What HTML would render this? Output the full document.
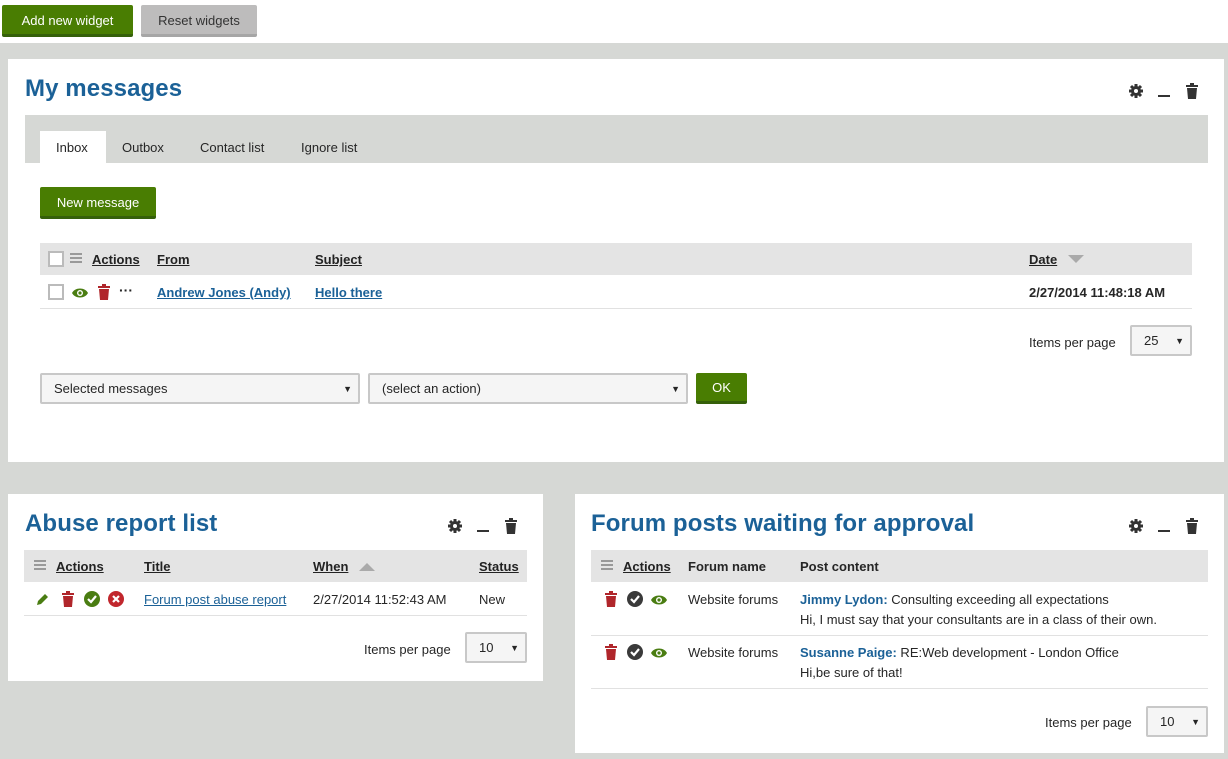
<!DOCTYPE html>
<html><head><meta charset="utf-8"><style>
*{margin:0;padding:0;box-sizing:border-box}
body{width:1228px;height:759px;background:#d6d8d5;font-family:"Liberation Sans",sans-serif;font-size:13px;color:#262626;position:relative;overflow:hidden}
.a{position:absolute}
.top{left:0;top:0;width:1228px;height:43px;background:#fff}
.btn{position:absolute;background:#497d02;color:#fff;border-bottom:3px solid #35600a;border-radius:2px;text-align:center;font-size:13px}
.gbtn{background:#bdbcbc;color:#333;border-bottom:3px solid #a6a6a6}
.panel{position:absolute;background:#fff}
h2{position:absolute;font-size:24px;font-weight:bold;color:#1b6197;white-space:nowrap;letter-spacing:0.1px}
.th{position:absolute;background:#e4e4e4;height:32px}
.u{text-decoration:underline;font-weight:bold;color:#222}
.lnk{color:#1b6197;font-weight:bold;text-decoration:underline}
.sel{position:absolute;background:#f5f5f5;border:2px solid #c8c8c8;border-radius:2px;height:31px;line-height:28px;padding-left:12px;font-size:13px}
.sel:after{content:"▼";position:absolute;right:6px;top:0;font-size:9px}
.line{position:absolute;height:1px;background:#e1e1e1}
.t{position:absolute;white-space:nowrap}
</style></head><body>
<div class="a top"></div>
<div class="btn" style="left:2px;top:5px;width:131px;height:32px;line-height:31px">Add new widget</div>
<div class="btn gbtn" style="left:141px;top:5px;width:116px;height:32px;line-height:31px">Reset widgets</div>

<svg width="0" height="0" style="position:absolute"><defs>
<g id="gear"><circle cx="8" cy="8" r="5" fill="#333"/><g stroke="#333" stroke-width="3"><line x1="8" y1="1" x2="8" y2="15"/><line x1="1" y1="8" x2="15" y2="8"/><line x1="3" y1="3" x2="13" y2="13"/><line x1="13" y1="3" x2="3" y2="13"/></g><circle cx="8" cy="8" r="2" fill="#fff"/></g>
<g id="trash"><rect x="1" y="2" width="12" height="2"/><rect x="5" y="0" width="4" height="2"/><path d="M2 5h10l-1 11H3z"/></g>
<g id="eye"><path d="M0 7C3 1 13 1 16 7 13 13 3 13 0 7z" fill="#4a7d12"/><circle cx="8" cy="7" r="3" fill="#fff"/><circle cx="8" cy="7" r="1.6" fill="#4a7d12"/></g>
<g id="chk"><circle cx="8" cy="8" r="8"/><path d="M4 8l3 3 5-6" stroke="#fff" stroke-width="2.2" fill="none"/></g>
</defs></svg>

<!-- My messages -->
<div class="panel" style="left:8px;top:59px;width:1216px;height:403px"></div>
<h2 style="left:25px;top:75px">My messages</h2>
<svg class="a" style="left:1128px;top:83px" width="16" height="16"><use href="#gear"/></svg>
<div class="a" style="left:1158px;top:95px;width:12px;height:2px;background:#333"></div>
<svg class="a" style="left:1185px;top:83px" width="14" height="16" fill="#333"><use href="#trash"/></svg>
<div class="a" style="left:25px;top:115px;width:1183px;height:48px;background:#d6d8d5"></div>
<div class="a" style="left:40px;top:131px;width:66px;height:32px;background:#fff"></div>
<div class="t" style="left:56px;top:140px">Inbox</div>
<div class="t" style="left:122px;top:140px">Outbox</div>
<div class="t" style="left:200px;top:140px">Contact list</div>
<div class="t" style="left:301px;top:140px">Ignore list</div>
<div class="btn" style="left:40px;top:187px;width:116px;height:32px;line-height:31px">New message</div>
<div class="th" style="left:40px;top:243px;width:1152px"></div>
<div class="a" style="left:48px;top:251px;width:16px;height:16px;border:2px solid #bbb;background:#fff"></div>
<div class="a" style="left:70px;top:253px;width:12px;height:10px;border-top:2px solid #999;border-bottom:2px solid #999"><div style="margin-top:2px;height:2px;background:#999"></div></div>
<div class="t u" style="left:92px;top:252px">Actions</div>
<div class="t u" style="left:157px;top:252px">From</div>
<div class="t u" style="left:315px;top:252px">Subject</div>
<div class="t u" style="left:1029px;top:252px">Date</div>
<div class="a" style="left:1068px;top:255px;width:0;height:0;border-left:8px solid transparent;border-right:8px solid transparent;border-top:8px solid #aaa"></div>
<div class="a" style="left:48px;top:284px;width:16px;height:16px;border:2px solid #bbb;background:#fff"></div>
<svg class="a" style="left:72px;top:286px" width="16" height="14"><use href="#eye"/></svg>
<svg class="a" style="left:97px;top:284px" width="14" height="16" fill="#b0262b"><use href="#trash"/></svg>
<div class="t" style="left:119px;top:282px;font-weight:bold;font-size:14px">···</div>
<div class="t lnk" style="left:157px;top:285px">Andrew Jones (Andy)</div>
<div class="t lnk" style="left:315px;top:285px">Hello there</div>
<div class="t" style="left:1029px;top:285px;font-weight:bold">2/27/2014 11:48:18 AM</div>
<div class="line" style="left:40px;top:308px;width:1152px"></div>
<div class="t" style="left:1029px;top:335px">Items per page</div>
<div class="sel" style="left:1130px;top:325px;width:62px">25</div>
<div class="sel" style="left:40px;top:373px;width:320px">Selected messages</div>
<div class="sel" style="left:368px;top:373px;width:320px">(select an action)</div>
<div class="btn" style="left:696px;top:373px;width:51px;height:31px;line-height:30px">OK</div>

<!-- Abuse -->
<div class="panel" style="left:8px;top:494px;width:535px;height:187px"></div>
<h2 style="left:25px;top:510px">Abuse report list</h2>
<svg class="a" style="left:447px;top:518px" width="16" height="16"><use href="#gear"/></svg>
<div class="a" style="left:477px;top:530px;width:12px;height:2px;background:#333"></div>
<svg class="a" style="left:504px;top:518px" width="14" height="16" fill="#333"><use href="#trash"/></svg>
<div class="th" style="left:24px;top:550px;width:503px"></div>
<div class="a" style="left:34px;top:560px;width:12px;height:10px;border-top:2px solid #999;border-bottom:2px solid #999"><div style="margin-top:2px;height:2px;background:#999"></div></div>
<div class="t u" style="left:56px;top:559px">Actions</div>
<div class="t u" style="left:144px;top:559px">Title</div>
<div class="t u" style="left:313px;top:559px">When</div>
<div class="a" style="left:359px;top:563px;width:0;height:0;border-left:8px solid transparent;border-right:8px solid transparent;border-bottom:8px solid #aaa"></div>
<div class="t u" style="left:479px;top:559px">Status</div>
<svg class="a" style="left:36px;top:592px" width="14" height="14"><path d="M1 13l1-4 7-7 3 3-7 7z" fill="#4a7d12"/></svg>
<svg class="a" style="left:61px;top:591px" width="14" height="16" fill="#b0262b"><use href="#trash"/></svg>
<svg class="a" style="left:84px;top:591px" width="16" height="16" fill="#4a7d12"><use href="#chk"/></svg>
<svg class="a" style="left:108px;top:591px" width="16" height="16"><circle cx="8" cy="8" r="8" fill="#c1272d"/><path d="M5 5l6 6M11 5l-6 6" stroke="#fff" stroke-width="2.2"/></svg>
<div class="t" style="left:144px;top:592px;color:#1b6197;text-decoration:underline">Forum post abuse report</div>
<div class="t" style="left:313px;top:592px">2/27/2014 11:52:43 AM</div>
<div class="t" style="left:479px;top:592px">New</div>
<div class="line" style="left:24px;top:615px;width:503px"></div>
<div class="t" style="left:364px;top:642px">Items per page</div>
<div class="sel" style="left:465px;top:632px;width:62px">10</div>

<!-- Forum -->
<div class="panel" style="left:575px;top:494px;width:649px;height:259px"></div>
<h2 style="left:591px;top:510px">Forum posts waiting for approval</h2>
<svg class="a" style="left:1128px;top:518px" width="16" height="16"><use href="#gear"/></svg>
<div class="a" style="left:1158px;top:530px;width:12px;height:2px;background:#333"></div>
<svg class="a" style="left:1185px;top:518px" width="14" height="16" fill="#333"><use href="#trash"/></svg>
<div class="th" style="left:591px;top:550px;width:617px"></div>
<div class="a" style="left:601px;top:560px;width:12px;height:10px;border-top:2px solid #999;border-bottom:2px solid #999"><div style="margin-top:2px;height:2px;background:#999"></div></div>
<div class="t u" style="left:623px;top:559px">Actions</div>
<div class="t" style="left:688px;top:559px;font-weight:bold">Forum name</div>
<div class="t" style="left:800px;top:559px;font-weight:bold">Post content</div>
<svg class="a" style="left:604px;top:591px" width="14" height="16" fill="#b0262b"><use href="#trash"/></svg>
<svg class="a" style="left:627px;top:591px" width="16" height="16" fill="#3a3a3a"><use href="#chk"/></svg>
<svg class="a" style="left:651px;top:593px" width="16" height="14"><use href="#eye"/></svg>
<div class="t" style="left:688px;top:592px">Website forums</div>
<div class="t" style="left:800px;top:592px"><b style="color:#1b6197">Jimmy Lydon:</b> Consulting exceeding all expectations</div>
<div class="t" style="left:800px;top:612px">Hi, I must say that your consultants are in a class of their own.</div>
<div class="line" style="left:591px;top:635px;width:617px"></div>
<svg class="a" style="left:604px;top:644px" width="14" height="16" fill="#b0262b"><use href="#trash"/></svg>
<svg class="a" style="left:627px;top:644px" width="16" height="16" fill="#3a3a3a"><use href="#chk"/></svg>
<svg class="a" style="left:651px;top:646px" width="16" height="14"><use href="#eye"/></svg>
<div class="t" style="left:688px;top:645px">Website forums</div>
<div class="t" style="left:800px;top:645px"><b style="color:#1b6197">Susanne Paige:</b> RE:Web development - London Office</div>
<div class="t" style="left:800px;top:665px">Hi,be sure of that!</div>
<div class="line" style="left:591px;top:688px;width:617px"></div>
<div class="t" style="left:1045px;top:715px">Items per page</div>
<div class="sel" style="left:1146px;top:706px;width:62px">10</div>
</body></html>
